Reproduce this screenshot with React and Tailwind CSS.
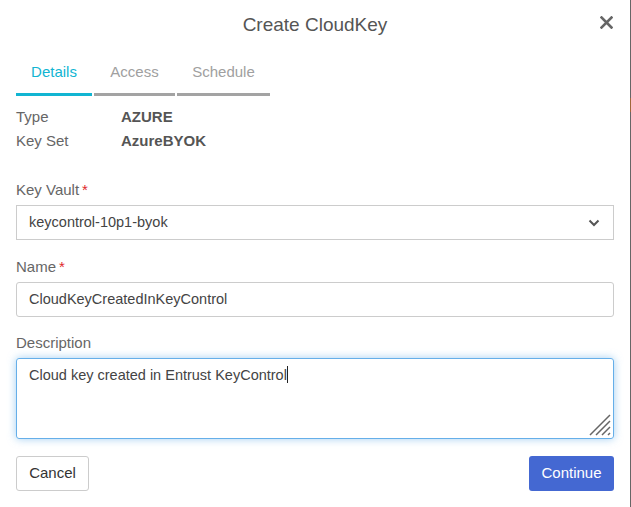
import React from 'react';

const tabs = [
  { label: 'Details', w: 'w-[76px]', active: true },
  { label: 'Access', w: 'w-[81px]' },
  { label: 'Schedule', w: 'w-[93px]' },
];

const Label = ({ children, required }) => (
  <div className="leading-[20px] text-[15px] text-[#666] mb-[5px]">
    {children}
    {required && <span className="text-[#e0272b] ml-[3px]">*</span>}
  </div>
);

export default function App() {
  return (
    <div className="w-[631px] h-[507px] flex bg-white font-['Liberation_Sans',Arial,sans-serif] overflow-hidden">
      <div className="w-[630px] flex flex-col px-4">
        {/* Header */}
        <div className="h-[50px] flex items-center justify-center relative">
          <h1 className="text-[19px] text-[#555] font-normal">Create CloudKey</h1>
          <button className="absolute right-[1px] top-[16px] w-[13px] h-[13px] text-[#666]">
            <svg viewBox="0 0 13 13" width="13" height="13">
              <path d="M1.5 1.5 L11.5 11.5 M11.5 1.5 L1.5 11.5" stroke="currentColor" strokeWidth="2.6" strokeLinecap="square" fill="none" />
            </svg>
          </button>
        </div>

        {/* Tabs */}
        <div className="flex gap-[2px]">
          {tabs.map((t) => (
            <div
              key={t.label}
              className={`${t.w} text-center text-[15px] leading-[24px] pt-[10px] pb-[9px] border-b-[3px] ${
                t.active ? 'text-[#11b5d2] border-[#11b5d2]' : 'text-[#a0a0a0] border-[#a3a3a3]'
              }`}
            >
              {t.label}
            </div>
          ))}
        </div>

        {/* Info */}
        <div className="mt-[9px] text-[15px] leading-[24px]">
          <div className="flex">
            <span className="w-[105px] text-[#666]">Type</span>
            <span className="font-bold text-[#555]">AZURE</span>
          </div>
          <div className="flex">
            <span className="w-[105px] text-[#666]">Key Set</span>
            <span className="font-bold text-[#555]">AzureBYOK</span>
          </div>
        </div>

        {/* Key Vault */}
        <div className="mt-[27px]">
          <Label required>Key Vault</Label>
          <div className="h-[35px] border border-[#ccc] flex items-center justify-between pl-[12px] pr-[13px] text-[14.5px] text-[#444]">
            <span>keycontrol-10p1-byok</span>
            <svg width="12" height="8" viewBox="0 0 12 8">
              <path d="M1.5 1.5 L6 6 L10.5 1.5" stroke="#555" strokeWidth="2" fill="none" />
            </svg>
          </div>
        </div>

        {/* Name */}
        <div className="mt-[17px]">
          <Label required>Name</Label>
          <div className="h-[35px] border border-[#ccc] rounded-[3px] flex items-center pl-[12px] text-[14.5px] text-[#444]">
            CloudKeyCreatedInKeyControl
          </div>
        </div>

        {/* Description */}
        <div className="mt-[16px]">
          <Label>Description</Label>
          <div className="relative h-[81px] border border-[#66afe9] rounded-[3px] shadow-[0_0_8px_rgba(102,175,233,0.6)] px-[12px] py-[6px] text-[14.5px] leading-[20px] text-[#444]">
            Cloud key created in Entrust KeyControl
            <span className="inline-block w-px h-[17px] bg-[#222] align-[-3px]" />
            <svg className="absolute right-[2px] bottom-[2px]" width="22" height="22" viewBox="0 0 22 22">
              <path d="M1 21 L21 1 M7 21 L21 7 M13 21 L21 13 M19 21 L21 19" stroke="#666" strokeWidth="1.5" fill="none" />
            </svg>
          </div>
        </div>

        {/* Buttons */}
        <div className="mt-[17px] flex justify-between">
          <button className="w-[73px] h-[35px] border border-[#ccc] rounded-[3px] text-[15px] text-[#333] bg-white">
            Cancel
          </button>
          <button className="w-[85px] h-[35px] rounded-[3px] text-[15px] text-white bg-[#4468d2]">
            Continue
          </button>
        </div>
      </div>
      <div className="w-px flex flex-col">
        <div className="h-[98px] bg-[#666]" />
        <div className="h-[14px] bg-[#a0673a]" />
        <div className="flex-1 bg-[#666]" />
      </div>
    </div>
  );
}
